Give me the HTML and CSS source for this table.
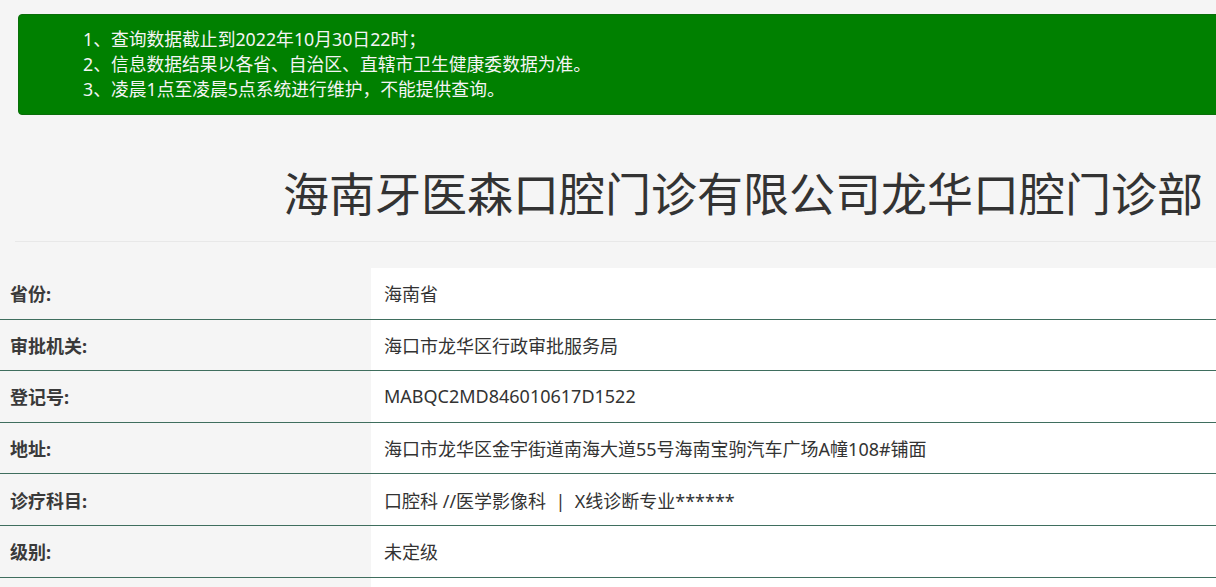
FILE: index.html
```html
<!DOCTYPE html>
<html lang="zh-CN">
<head>
<meta charset="utf-8">
<title>医疗机构查询</title>
<link rel="stylesheet" href="styles.css">
</head>
<body>
<div class="page">
  <div class="notice">
    <p>1、查询数据截止到2022年10月30日22时；</p>
    <p>2、信息数据结果以各省、自治区、直辖市卫生健康委数据为准。</p>
    <p>3、凌晨1点至凌晨5点系统进行维护，不能提供查询。</p>
  </div>
  <h1 class="title">海南牙医森口腔门诊有限公司龙华口腔门诊部</h1>
  <div class="info">
    <div class="row"><div class="label">省份:</div><div class="value">海南省</div></div>
    <div class="row"><div class="label">审批机关:</div><div class="value">海口市龙华区行政审批服务局</div></div>
    <div class="row"><div class="label">登记号:</div><div class="value">MABQC2MD846010617D1522</div></div>
    <div class="row"><div class="label">地址:</div><div class="value">海口市龙华区金宇街道南海大道55号海南宝驹汽车广场A幢108#铺面</div></div>
    <div class="row"><div class="label">诊疗科目:</div><div class="value">口腔科 //医学影像科 &nbsp;|&nbsp; X线诊断专业******</div></div>
    <div class="row"><div class="label">级别:</div><div class="value">未定级</div></div>
    <div class="row"><div class="label"></div><div class="value"></div></div>
  </div>
</div>
</body>
</html>
```

FILE: styles.css
```css
html, body {
  margin: 0;
  padding: 0;
  background: #f5f5f5;
  overflow: hidden;
}
body {
  font-family: "Noto Sans", "Noto Sans CJK SC", sans-serif;
  color: #333;
}
.page {
  padding-top: 14px;
}
.notice {
  margin-left: 18px;
  margin-right: -20px;
  background: #008000;
  border: 1px solid #0a6e0a;
  border-radius: 4px;
  padding: 12px 0 12px 64px;
  color: #f4f4f4;
  font-size: 17.8px;
  line-height: 25px;
}
.notice p {
  margin: 0;
}
.title {
  margin: 50px 0 0 15px;
  padding: 0 13px 20px 0;
  font-size: 46px;
  font-weight: 400;
  line-height: 56px;
  text-align: right;
  color: #333;
  border-bottom: 1px solid #e8e8e8;
}
.info {
  margin-top: 26px;
}
.row {
  display: flex;
  height: 50.6px;
  border-bottom: 1px solid #3f6e5e;
  font-size: 18px;
}
.label {
  width: 361px;
  padding-left: 10px;
  display: flex;
  align-items: center;
  font-weight: 700;
  color: #3a3a3a;
  background: #f5f5f5;
}
.value {
  flex: 1;
  padding-left: 13px;
  display: flex;
  align-items: center;
  background: #fff;
  color: #333;
}
```
